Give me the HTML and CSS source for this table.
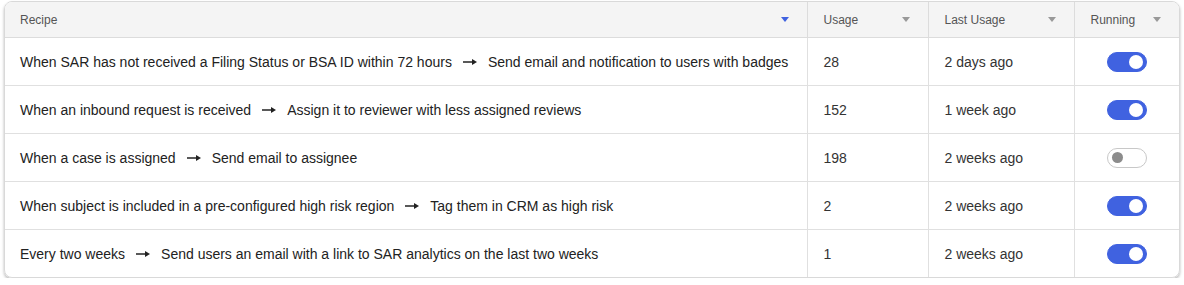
FILE: index.html
```html
<!DOCTYPE html>
<html>
<head>
<meta charset="utf-8">
<link rel="stylesheet" href="styles.css">
</head>
<body>
<div class="card">
  <table class="grid">
    <colgroup>
      <col class="c-recipe"><col class="c-usage"><col class="c-last"><col class="c-run">
    </colgroup>
    <thead>
      <tr>
        <th><div class="th"><span>Recipe</span><span class="caret active"></span></div></th>
        <th><div class="th"><span>Usage</span><span class="caret"></span></div></th>
        <th><div class="th"><span>Last Usage</span><span class="caret"></span></div></th>
        <th><div class="th"><span>Running</span><span class="caret"></span></div></th>
      </tr>
    </thead>
    <tbody>
      <tr>
        <td>When SAR has not received a Filing Status or BSA ID within 72 hours<svg class="arrow" viewBox="0 0 14 8" width="14" height="8"><path d="M0 4H11" stroke="#222" stroke-width="1.4"/><path d="M9 1L14 4L9 7Z" fill="#222"/></svg>Send email and notification to users with badges</td>
        <td>28</td><td>2 days ago</td><td class="run"><span class="toggle on"></span></td>
      </tr>
      <tr>
        <td>When an inbound request is received<svg class="arrow" viewBox="0 0 14 8" width="14" height="8"><path d="M0 4H11" stroke="#222" stroke-width="1.4"/><path d="M9 1L14 4L9 7Z" fill="#222"/></svg>Assign it to reviewer with less assigned reviews</td>
        <td>152</td><td>1 week ago</td><td class="run"><span class="toggle on"></span></td>
      </tr>
      <tr>
        <td>When a case is assigned<svg class="arrow" viewBox="0 0 14 8" width="14" height="8"><path d="M0 4H11" stroke="#222" stroke-width="1.4"/><path d="M9 1L14 4L9 7Z" fill="#222"/></svg>Send email to assignee</td>
        <td>198</td><td>2 weeks ago</td><td class="run"><span class="toggle"></span></td>
      </tr>
      <tr>
        <td>When subject is included in a pre-configured high risk region<svg class="arrow" viewBox="0 0 14 8" width="14" height="8"><path d="M0 4H11" stroke="#222" stroke-width="1.4"/><path d="M9 1L14 4L9 7Z" fill="#222"/></svg>Tag them in CRM as high risk</td>
        <td>2</td><td>2 weeks ago</td><td class="run"><span class="toggle on"></span></td>
      </tr>
      <tr>
        <td>Every two weeks<svg class="arrow" viewBox="0 0 14 8" width="14" height="8"><path d="M0 4H11" stroke="#222" stroke-width="1.4"/><path d="M9 1L14 4L9 7Z" fill="#222"/></svg>Send users an email with a link to SAR analytics on the last two weeks</td>
        <td>1</td><td>2 weeks ago</td><td class="run"><span class="toggle on"></span></td>
      </tr>
    </tbody>
  </table>
</div>
</body>
</html>
```
FILE: styles.css
```css
html, body { margin: 0; padding: 0; background: #fff; }
body { padding: 1px 4px 0 4px; font-family: "Liberation Sans", Arial, sans-serif; color: #1f1f1f; }
.card {
  width: 1176px;
  border: 1px solid #d9d9d9;
  border-radius: 8px;
  overflow: hidden;
  box-shadow: 0 2px 3px rgba(0,0,0,0.28);
  box-sizing: border-box;
}
.grid { width: 100%; border-collapse: collapse; table-layout: fixed; }
.c-recipe { width: 802px; }
.c-usage { width: 121px; }
.c-last { width: 146px; }
.c-run { width: auto; }
thead th {
  background: #f4f4f4;
  height: 35px;
  padding: 0 16px;
  font-size: 12px;
  font-weight: 400;
  color: #555;
  text-align: left;
  border-bottom: 1px solid #dcdcdc;
  border-left: 1px solid #dcdcdc;
}
thead th:first-child { border-left: none; padding-left: 15px; }
.th { display: flex; align-items: center; justify-content: space-between; }
.caret {
  width: 0; height: 0;
  border-left: 4px solid transparent;
  border-right: 4px solid transparent;
  border-top: 5px solid #999;
  margin-right: 2px;
}
.caret.active { border-top-color: #4062e0; }
tbody td {
  height: 47px;
  padding: 0 16px;
  font-size: 14px;
  color: #222;
  border-top: 1px solid #e0e0e0;
  border-left: 1px solid #e0e0e0;
  white-space: nowrap;
}
tbody tr:first-child td { border-top: none; }
tbody td:first-child { border-left: none; padding-left: 15px; }
tbody td:nth-child(2), tbody td:nth-child(3) { color: #333; }
.arrow { display: inline-block; margin: 0 11px; vertical-align: middle; position: relative; top: -1px; }
.run { text-align: center; }
.toggle {
  display: inline-block;
  position: relative;
  width: 40px; height: 20px;
  border-radius: 10px;
  box-sizing: border-box;
  border: 1.5px solid #c8c8c8;
  background: #fff;
  vertical-align: middle;
}
.toggle::after {
  content: "";
  position: absolute;
  top: 50%; left: 4px;
  width: 11px; height: 11px;
  margin-top: -5.5px;
  border-radius: 50%;
  background: #8c8c8c;
}
.toggle.on { background: #4062e0; border-color: #4062e0; }
.toggle.on::after { left: auto; right: 3px; width: 14px; height: 14px; margin-top: -7px; background: #fff; }
```
